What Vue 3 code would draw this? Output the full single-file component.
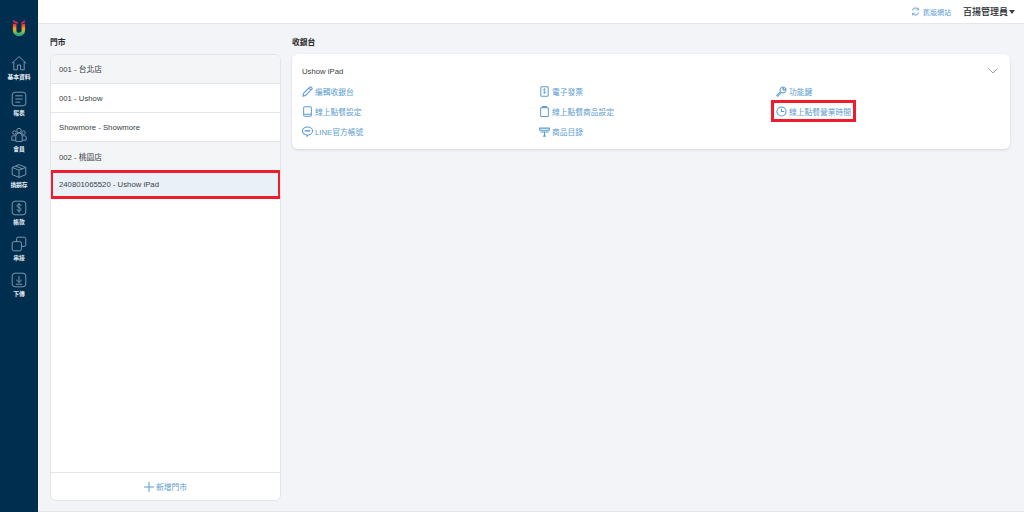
<script setup>
const navItems = [
  { label: '基本資料', icon: 'home' },
  { label: '報表', icon: 'report' },
  { label: '會員', icon: 'members' },
  { label: '換銷存', icon: 'box' },
  { label: '帳款', icon: 'money' },
  { label: '串接', icon: 'link' },
  { label: '下傳', icon: 'download' }
]
const stores = [
  { label: '001 - 台北店', kind: 'group' },
  { label: '001 - Ushow', kind: 'plain' },
  { label: 'Showmore - Showmore', kind: 'plain' },
  { label: '002 - 桃園店', kind: 'group' },
  { label: '240801065520 - Ushow iPad', kind: 'active' }
]
const actions = [
  { label: '編輯收銀台', icon: 'pencil' },
  { label: '電子發票', icon: 'invoice' },
  { label: '功能鍵', icon: 'wrench' },
  { label: '線上點餐設定', icon: 'tablet' },
  { label: '線上點餐商品設定', icon: 'clipboard' },
  { label: '線上點餐營業時間', icon: 'clock', marked: true },
  { label: 'LINE官方帳號', icon: 'line' },
  { label: '商品目錄', icon: 'catalog' }
]
</script>

<template>
  <div class="app">
    <aside class="side">
      <svg class="logo" viewBox="0 0 16 20" width="14" height="18">
        <defs>
          <linearGradient id="lg" x1="0" y1="0" x2="0" y2="1">
            <stop offset="0.1" stop-color="#ee3a3a" />
            <stop offset="0.45" stop-color="#f5a020" />
            <stop offset="0.75" stop-color="#9dbb35" />
            <stop offset="1" stop-color="#26a88e" />
          </linearGradient>
        </defs>
        <path d="M3 5V12.500a5 5 0 0 0 10 0V5" fill="none" stroke="url(#lg)" stroke-width="4" />
        <path d="M1 .8l5.500 2.400v2.300L1 3.200z" fill="#e0244e" />
        <path d="M10.500 3.500l4.500-2.500v2.500l-4.500 2z" fill="#e0244e" />
      </svg>
      <nav class="nav">
        <div v-for="n in navItems" :key="n.label" class="nav-item">
          <svg class="nav-icon" viewBox="0 0 20 20" width="16" height="16" fill="none" stroke="#8199ad" stroke-width="1.200">
            <template v-if="n.icon === 'home'">
              <path d="M1 10.500L10 2l9 8.500" /><path d="M3.500 8.500V18.500h4.500v-6h4v6h4.500V8.500" />
            </template>
            <template v-else-if="n.icon === 'report'">
              <rect x="1.500" y="1.500" width="17" height="17" rx="3.500" /><path d="M5.500 6h9M5.500 10h9M5.500 14h6" />
            </template>
            <template v-else-if="n.icon === 'members'">
              <circle cx="10" cy="4.500" r="2.800" /><circle cx="4.300" cy="7" r="2.200" /><circle cx="15.700" cy="7" r="2.200" />
              <path d="M6 18v-6.500a4 4 0 0 1 8 0V18zM6 11H3a2 2 0 0 0-2 2v3.500h5M14 11h3a2 2 0 0 1 2 2v3.500h-5" />
            </template>
            <template v-else-if="n.icon === 'box'">
              <path d="M10 2l8.500 3.500v9L10 18l-8.500-3.500v-9z" /><path d="M1.500 5.500L10 9l8.500-3.500M10 9v9M5.800 3.800l8.400 3.500" />
            </template>
            <template v-else-if="n.icon === 'money'">
              <rect x="1.500" y="1.500" width="17" height="17" rx="3.500" />
              <path d="M12.500 7.300c0-1.300-1-2-2.500-2s-2.500.8-2.500 2 1 1.700 2.500 2.100 2.500 1 2.500 2.300-1 2-2.500 2-2.500-.7-2.500-2M10 4v12" />
            </template>
            <template v-else-if="n.icon === 'link'">
              <rect x="1.500" y="7" width="11.500" height="11.500" rx="2" /><path d="M7 7V3.500a2 2 0 0 1 2-2h7.500a2 2 0 0 1 2 2V11a2 2 0 0 1-2 2H13" />
            </template>
            <template v-else>
              <rect x="1.500" y="1.500" width="17" height="17" rx="3.500" /><path d="M10 5v8M6.500 9.800L10 13l3.500-3.200M6 15.300h8" />
            </template>
          </svg>
          <span class="nav-label">{{ n.label }}</span>
        </div>
      </nav>
    </aside>

    <div class="body">
      <header class="top">
        <span class="old">
          <svg viewBox="0 0 12 12" width="9" height="9" fill="none" stroke="#5b9bd0" stroke-width="1.300">
            <path d="M2 4.500A4.200 4.200 0 0 1 9.500 3M10 7.500A4.200 4.200 0 0 1 2.500 9" />
            <path d="M10 .8v3H7M2 11.200v-3h3" stroke-width="1" />
          </svg>
          舊版網站
        </span>
        <span class="user">百揚管理員<i class="caret"></i></span>
      </header>

      <main class="main">
        <section class="col-left">
          <h2 class="title">門市</h2>
          <div class="panel">
            <ul class="list">
              <li v-for="s in stores" :key="s.label" class="row" :class="s.kind">{{ s.label }}</li>
            </ul>
            <div class="add">
              <svg viewBox="0 0 10 10" width="10" height="10" stroke="#5b9bd0" stroke-width="1"><path d="M5 0v10M0 5h10" /></svg>
              新增門市
            </div>
          </div>
        </section>

        <section class="col-right">
          <h2 class="title">收銀台</h2>
          <div class="card">
            <div class="card-head">
              <span>Ushow iPad</span>
              <svg viewBox="0 0 10 6" width="10" height="6" fill="none" stroke="#9aa3ab" stroke-width="1"><path d="M.5.500L5 5l4.500-4.500" /></svg>
            </div>
            <div class="grid">
              <div v-for="a in actions" :key="a.label" class="cell">
                <span class="action" :class="{ marked: a.marked }">
                  <svg viewBox="0 0 12 12" width="11" height="11" fill="none" stroke="#5b9bd0" stroke-width="1.100">
                    <path v-if="a.icon === 'pencil'" d="M1 11l.7-3L8.500 1.200a1 1 0 0 1 1.400 0l.9.900a1 1 0 0 1 0 1.400L4 10.300zM7.500 2.300l2.200 2.200" />
                    <template v-else-if="a.icon === 'invoice'">
                      <rect x="2" y=".8" width="8" height="10.500" rx="1" />
                      <path d="M7.300 4.300C7.300 3.600 6.800 3.200 6 3.200s-1.300.4-1.300 1.100S5.300 5.400 6 5.600s1.300.5 1.300 1.200S6.800 8 6 8 4.700 7.600 4.700 6.900M6 2.500v6.300" stroke-width=".7" />
                    </template>
                    <path v-else-if="a.icon === 'wrench'" d="M.8 10.200L5 6a3.200 3.200 0 0 1 4.200-4.500L7.300 3.400l1.300 1.300 1.900-1.900A3.200 3.200 0 0 1 6 7L1.800 11.200z" />
                    <template v-else-if="a.icon === 'tablet'">
                      <rect x="1.800" y=".8" width="8.400" height="10.400" rx="1.200" /><path d="M1.800 9h8.400" />
                    </template>
                    <template v-else-if="a.icon === 'clipboard'">
                      <rect x="1.800" y="1.800" width="8.400" height="9.600" rx=".8" /><path d="M4 1.800V.8h4v1" stroke-width="1.400" />
                    </template>
                    <template v-else-if="a.icon === 'clock'">
                      <circle cx="6" cy="6" r="5" /><path d="M6 3v3h3" />
                    </template>
                    <template v-else-if="a.icon === 'line'">
                      <path d="M6 1c3 0 5.500 1.800 5.500 4.300S9 9.500 7 9.800L5.500 11.300V9.800C3 9.500.5 7.800.5 5.300S3 1 6 1z" /><path d="M3 5.300h6" stroke-width="1.600" />
                    </template>
                    <template v-else>
                      <path d="M.8 2.300h10.400v2.400H.8zM1.500 6.500h9M6 6.500v4.500M4.500 11h3" stroke-width="1.200" />
                    </template>
                  </svg>
                  {{ a.label }}
                </span>
              </div>
            </div>
          </div>
        </section>
      </main>
    </div>
  </div>
</template>

<style>
html, body { margin: 0; }
</style>

<style scoped>
.app {
  display: flex;
  width: 1024px;
  height: 512px;
  overflow: hidden;
  font-family: "Liberation Sans", "Noto Sans CJK TC", sans-serif;
  font-size: 7.75px;
  color: #3a3f44;
  background: #f3f4f7;
}
.side {
  width: 38px;
  flex: none;
  background: #002e4f;
  display: flex;
  flex-direction: column;
  align-items: center;
  padding-top: 19px;
  box-sizing: border-box;
}
.logo { display: block; }
.nav {
  margin-top: 17.5px;
  display: flex;
  flex-direction: column;
  gap: 10.3px;
}
.nav-item {
  display: flex;
  flex-direction: column;
  align-items: center;
  height: 26px;
}
.nav-icon { display: block; flex: none; }
.nav-label {
  margin-top: 3px;
  font-size: 5.75px;
  font-weight: 700;
  line-height: 7px;
  color: #e6edf2;
  white-space: nowrap;
}
.body {
  flex: 1;
  min-width: 0;
  display: flex;
  flex-direction: column;
}
.top {
  height: 24px;
  flex: none;
  box-sizing: border-box;
  background: #fff;
  border-bottom: 1px solid #e4e6e9;
  display: flex;
  align-items: center;
  justify-content: flex-end;
  gap: 12px;
  padding: 0 9px 0 0;
}
.old {
  display: flex;
  align-items: center;
  gap: 3px;
  color: #5b9bd0;
  font-size: 7px;
}
.user {
  display: flex;
  align-items: center;
  gap: 1px;
  font-size: 9px;
  font-weight: 500;
  color: #25292d;
}
.caret {
  width: 0;
  height: 0;
  border-left: 3px solid transparent;
  border-right: 3px solid transparent;
  border-top: 4px solid #3a3f44;
}
.main {
  flex: 1;
  min-height: 0;
  display: flex;
  gap: 11px;
  padding: 14px 14px 10px 12px;
  border-bottom: 1px solid #e4e6e9;
}
.col-left {
  width: 231px;
  flex: none;
  display: flex;
  flex-direction: column;
}
.col-right {
  flex: 1;
  min-width: 0;
}
.title {
  margin: 0 0 6px;
  font-size: 7.75px;
  line-height: 10px;
  font-weight: 700;
  color: #25292d;
}
.panel {
  flex: 1;
  min-height: 0;
  box-sizing: border-box;
  background: #fff;
  border: 1px solid #e2e4e7;
  border-radius: 6px;
  display: flex;
  flex-direction: column;
  overflow: hidden;
}
.list {
  flex: 1;
  margin: 0;
  padding: 0;
  list-style: none;
}
.row {
  height: 29px;
  box-sizing: border-box;
  display: flex;
  align-items: center;
  padding-left: 8px;
  border-bottom: 1px solid #e4e6e9;
  font-size: 7.75px;
}
.row:first-child { padding-bottom: 2px; }
.row.group { background: #f4f5f7; }
.row.active {
  background: #e9f0f8;
  border: 3px solid #ee1c2c;
  padding-left: 6px;
  margin: -1px -1px 0;
}
.add {
  height: 28px;
  flex: none;
  box-sizing: border-box;
  display: flex;
  align-items: center;
  justify-content: center;
  gap: 2px;
  border-top: 1px solid #e4e6e9;
  color: #5b9bd0;
  font-size: 7.75px;
}
.card {
  background: #fff;
  border-radius: 6px;
  box-shadow: 0 1px 3px rgba(0, 0, 0, 0.12);
  height: 95px;
  box-sizing: border-box;
  padding: 12px 12px 0 10px;
}
.card-head {
  display: flex;
  justify-content: space-between;
  align-items: center;
  height: 10px;
  font-size: 7.75px;
  color: #3a3f44;
}
.grid {
  margin-top: 9px;
  display: grid;
  grid-template-columns: repeat(3, 237px);
  grid-auto-rows: 20px;
}
.cell {
  display: flex;
  align-items: flex-start;
}
.action {
  display: inline-flex;
  align-items: center;
  gap: 2px;
  height: 12px;
  color: #5b9bd0;
  font-size: 7.75px;
  white-space: nowrap;
}
.action.marked {
  outline: 3px solid #ee1c2c;
  outline-offset: 2px;
}
</style>
